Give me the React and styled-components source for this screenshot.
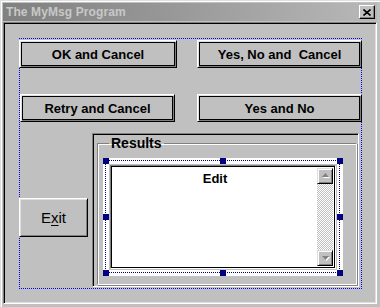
import React from "react";
import styled, { createGlobalStyle } from "styled-components";

const GlobalStyle = createGlobalStyle`
  html, body {
    margin: 0;
    padding: 0;
    background: #c0c0c0;
  }
  body {
    width: 380px;
    height: 307px;
    overflow: hidden;
    font-family: "Liberation Sans", Arial, sans-serif;
  }
`;

const Window = styled.div`
  box-sizing: border-box;
  width: 380px;
  height: 307px;
  padding: 3px;
  background: #c0c0c0;
  box-shadow: inset 1px 1px #dfdfdf, inset 2px 2px #fff;
  display: flex;
  flex-direction: column;
  gap: 1px;
`;

const TitleBar = styled.div`
  height: 18px;
  flex: none;
  display: flex;
  align-items: center;
  justify-content: space-between;
  padding: 0 2px 0 3px;
  background: linear-gradient(90deg, #808080 0%, #989898 45%, #b8b8b8 100%);
`;

const Title = styled.span`
  color: #c8c8c8;
  font-weight: bold;
  font-size: 12px;
  letter-spacing: 0.1px;
`;

const CloseBox = styled.div`
  box-sizing: border-box;
  width: 16px;
  height: 14px;
  display: flex;
  align-items: center;
  justify-content: center;
  background: #c0c0c0;
  border: 1px solid;
  border-color: #fff #000 #000 #fff;
  box-shadow: inset -1px -1px #808080;
`;

const Client = styled.div`
  flex: 1;
  box-sizing: border-box;
  border: 1px solid;
  border-color: #808080 #fff #fff #808080;
  box-shadow: inset 1px 1px #000, inset -1px -1px #dfdfdf;
  padding: 15px 0 0 15px;
`;

const hDots = "repeating-linear-gradient(90deg, #0000ff 0 1px, transparent 1px 2px)";
const vDots = "repeating-linear-gradient(180deg, #0000ff 0 1px, transparent 1px 2px)";

/* design-time selection frame: dotted blue edge drawn as backgrounds so the
   buttons on its edge paint over it */
const Selection = styled.div`
  box-sizing: border-box;
  width: 343px;
  height: 251px;
  padding: 1px;
  background: ${hDots} left top / 100% 1px no-repeat,
    ${hDots} left bottom / 100% 1px no-repeat,
    ${vDots} left top / 1px 100% no-repeat,
    ${vDots} right top / 1px 100% no-repeat;
  display: flex;
  flex-direction: column;
`;

const ButtonRow = styled.div`
  display: flex;
  justify-content: space-between;
  margin: ${(p) => p.$top}px -1px 0 -1px;
`;

const PushButton = styled.button`
  box-sizing: border-box;
  width: ${(p) => p.$w}px;
  height: 28px;
  margin: 0 0 0 ${(p) => p.$ml || 0}px;
  padding: 0;
  background: #c0c0c0;
  color: #000;
  font-family: "Liberation Sans", Arial, sans-serif;
  font-weight: bold;
  font-size: 13px;
  white-space: pre;
  border: 1px solid;
  border-color: #fff #000 #000 #fff;
  box-shadow: inset 1px 1px #dfdfdf, inset -1px -1px #808080,
    inset 0 0 0 2px #000;
`;

const Lower = styled.div`
  display: flex;
  margin: 11px 0 0 -1px;
  gap: 4px;
`;

const ExitButton = styled.button`
  box-sizing: border-box;
  width: 69px;
  height: 39px;
  margin-top: 65px;
  padding: 0;
  background: #c0c0c0;
  color: #000;
  font-family: "Liberation Sans", Arial, sans-serif;
  font-size: 15px;
  border: 1px solid;
  border-color: #fff #000 #000 #fff;
  box-shadow: inset 1px 1px #dfdfdf, inset -1px -1px #808080;
  u {
    text-decoration: underline;
    text-underline-offset: 2px;
  }
`;

const Panel = styled.div`
  box-sizing: border-box;
  width: 267px;
  height: 154px;
  border: 1px solid;
  border-color: #808080 #fff #fff #808080;
  box-shadow: inset 1px 1px #000;
  padding: 2px 1px 1px 4px;
  display: flex;
`;

const GroupBox = styled.fieldset`
  box-sizing: border-box;
  flex: 1;
  margin: 0;
  padding: 6px 0 0 5px;
  border: 1px solid;
  border-color: #808080 #fff #fff #808080;
  box-shadow: inset 1px 1px #fff, 1px 1px #808080;
  min-width: 0;
`;

const Legend = styled.legend`
  padding: 0 2px;
  margin-left: 6px;
  font-weight: bold;
  font-size: 14px;
  line-height: 14px;
  color: #000;
`;

const SelBox = styled.div`
  position: relative;
  box-sizing: border-box;
  width: 240px;
  height: 118px;
  margin-top: 2px;
  padding: 2px;
  background: #fff;
`;

const DotRing = styled.div`
  height: 100%;
  box-sizing: border-box;
  padding: 2px;
  background: conic-gradient(at 1px 1px, transparent 75%, #000080 0) 0 0 / 2px
      2px,
    #fff;
`;

const WhiteRing = styled.div`
  height: 100%;
  box-sizing: border-box;
  padding: 2px;
  background: #fff;
`;

const GapRing = styled.div`
  height: 100%;
  box-sizing: border-box;
  padding: 1px;
  background: #c0c0c0;
`;

const Handle = styled.div`
  position: absolute;
  width: 6px;
  height: 6px;
  background: #000080;
  left: ${(p) => p.$x}px;
  top: ${(p) => p.$y}px;
`;

const Edit = styled.div`
  height: 100%;
  box-sizing: border-box;
  border: 1px solid;
  border-color: #808080 #fff #fff #808080;
  box-shadow: inset 1px 1px #000, inset -1px -1px #000;
  background: #fff;
  padding: 2px;
  display: flex;
`;

const EditText = styled.div`
  flex: 1;
  text-align: center;
  font-weight: bold;
  font-size: 13px;
  padding-top: 3px;
`;

const ScrollBar = styled.div`
  width: 16px;
  display: flex;
  flex-direction: column;
  background: repeating-conic-gradient(#fff 0 25%, #c0c0c0 0 50%) 0 0 / 2px
    2px;
`;

const ScrollButton = styled.div`
  box-sizing: border-box;
  width: 16px;
  height: 16px;
  display: flex;
  align-items: center;
  justify-content: center;
  background: #c0c0c0;
  border: 1px solid;
  border-color: #dfdfdf #000 #000 #dfdfdf;
  box-shadow: inset 1px 1px #fff, inset -1px -1px #808080;
`;

const Track = styled.div`
  flex: 1;
`;

const Arrow = ({ down }) => (
  <svg width="9" height="6" viewBox="0 0 9 6">
    {down ? (
      <>
        <path d="M2 2h7l-3.5 4z" fill="#fff" />
        <path d="M1 1h7l-3.5 4z" fill="#808080" />
      </>
    ) : (
      <>
        <path d="M5.5 1l3.5 4h-7z" fill="#fff" />
        <path d="M4.5 0l3.5 4h-7z" fill="#808080" />
      </>
    )}
  </svg>
);

const handles = [
  [0, 0],
  [117, 0],
  [234, 0],
  [0, 56],
  [234, 56],
  [0, 112],
  [117, 112],
  [234, 112],
];

export default function App() {
  return (
    <>
      <GlobalStyle />
      <Window>
        <TitleBar>
          <Title>The MyMsg Program</Title>
          <CloseBox>
            <svg width="8" height="7" viewBox="0 0 8 7">
              <path d="M0.5 0.5l7 6M7.5 0.5l-7 6" stroke="#000" strokeWidth="1.6" />
            </svg>
          </CloseBox>
        </TitleBar>
        <Client>
          <Selection>
            <ButtonRow $top={1}>
              <PushButton $w={158}>OK and Cancel</PushButton>
              <PushButton $w={165}>Yes, No and  Cancel</PushButton>
            </ButtonRow>
            <ButtonRow $top={26}>
              <PushButton $w={155} $ml={1}>Retry and Cancel</PushButton>
              <PushButton $w={165}>Yes and No</PushButton>
            </ButtonRow>
            <Lower>
              <ExitButton>
                E<u>x</u>it
              </ExitButton>
              <Panel>
                <GroupBox>
                  <Legend>Results</Legend>
                  <SelBox>
                    <DotRing>
                      <WhiteRing>
                        <GapRing>
                          <Edit>
                            <EditText>Edit</EditText>
                            <ScrollBar>
                              <ScrollButton>
                                <Arrow />
                              </ScrollButton>
                              <Track />
                              <ScrollButton>
                                <Arrow down />
                              </ScrollButton>
                            </ScrollBar>
                          </Edit>
                        </GapRing>
                      </WhiteRing>
                    </DotRing>
                    {handles.map(([x, y]) => (
                      <Handle key={`${x}-${y}`} $x={x} $y={y} />
                    ))}
                  </SelBox>
                </GroupBox>
              </Panel>
            </Lower>
          </Selection>
        </Client>
      </Window>
    </>
  );
}
